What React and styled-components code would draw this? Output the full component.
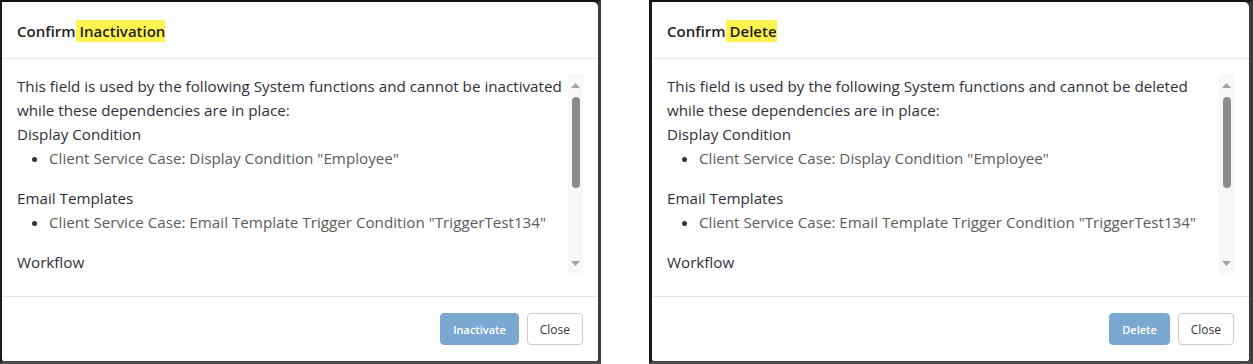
import React from 'react';
import styled, { createGlobalStyle } from 'styled-components';

const GlobalStyle = createGlobalStyle`
  html, body {
    margin: 0;
    padding: 0;
    background: #ffffff;
  }
  body {
    font-family: 'Open Sans', 'Noto Sans', sans-serif;
    color: #333;
  }
`;

const dialogs = [
  { action: 'Inactivation', verb: 'inactivated', button: 'Inactivate', edge: 'left' },
  { action: 'Delete', verb: 'deleted', button: 'Delete', edge: 'right' },
];

const dependencies = [
  { title: 'Display Condition', items: ['Client Service Case: Display Condition "Employee"'] },
  {
    title: 'Email Templates',
    items: ['Client Service Case: Email Template Trigger Condition "TriggerTest134"'],
  },
  { title: 'Workflow', items: [] },
];

function Arrow({ down }) {
  return (
    <svg width='9' height='5' viewBox='0 0 9 5'>
      <polygon points={down ? '0,0 9,0 4.5,5' : '0,5 9,5 4.5,0'} fill='#a3a3a3' />
    </svg>
  );
}

function ConfirmDialog({ action, verb, button, edge }) {
  return (
    <Frame edge={edge}>
      <Modal>
        <Header>
          <Title>
            Confirm<Mark> {action} </Mark>
          </Title>
        </Header>
        <Body>
          <ScrollArea>
            <Content>
              <p>
                This field is used by the following System functions and cannot be {verb}
                <br />
                while these dependencies are in place:
              </p>
              {dependencies.map((dep) => (
                <div key={dep.title}>
                  <div>{dep.title}</div>
                  {dep.items.length > 0 && (
                    <List>
                      {dep.items.map((item) => (
                        <li key={item}>
                          <span>{item}</span>
                        </li>
                      ))}
                    </List>
                  )}
                </div>
              ))}
            </Content>
            <Scrollbar>
              <ScrollButton>
                <Arrow />
              </ScrollButton>
              <Thumb />
              <ScrollButton down>
                <Arrow down />
              </ScrollButton>
            </Scrollbar>
          </ScrollArea>
        </Body>
        <Footer>
          <Button primary disabled>
            {button}
          </Button>
          <Button>Close</Button>
        </Footer>
      </Modal>
    </Frame>
  );
}

export default function App() {
  return (
    <>
      <GlobalStyle />
      <Page>
        {dialogs.map((d) => (
          <ConfirmDialog key={d.button} {...d} />
        ))}
      </Page>
    </>
  );
}

const Page = styled.div`
  display: flex;
  gap: 48px;
  width: 1253px;
  height: 364px;
`;

const Frame = styled.div`
  box-sizing: border-box;
  width: ${(p) => (p.edge === 'left' ? '601px' : '604px')};
  height: 364px;
  background: #2a2a2a;
  border-top: 2px solid #111;
  border-left: ${(p) => (p.edge === 'left' ? '2px' : '3px')} solid #1a1a1a;
  border-right: ${(p) => (p.edge === 'left' ? '3px' : '4px')} solid #3c3c3c;
  border-bottom: 3px solid #4a4a4a;
  display: flex;
`;

const Modal = styled.div`
  flex: 1;
  display: flex;
  flex-direction: column;
  background: #fff;
  border-radius: 0 5px 2px 2px;
  overflow: hidden;
`;

const Header = styled.div`
  height: 57px;
  box-sizing: border-box;
  padding: 1px 15px 0;
  display: flex;
  align-items: center;
  border-bottom: 1px solid #e5e5e5;
`;

const Title = styled.h4`
  margin: 0;
  font-size: 15px;
  font-weight: 600;
  color: #222;
  line-height: 20px;
`;

const Mark = styled.span`
  background: #fff44f;
  padding: 1px 0;
`;

const Body = styled.div`
  height: 237px;
  box-sizing: border-box;
  padding: 16px 15px 21px 15px;
`;

const ScrollArea = styled.div`
  display: flex;
  height: 200px;
`;

const Content = styled.div`
  flex: 1;
  overflow: hidden;
  font-size: 15.2px;
  line-height: 24px;
  margin-top: -1px;
  color: #2f2f3a;
  p {
    margin: 0;
  }
`;

const List = styled.ul`
  margin: 0 0 16px;
  padding-left: 32px;
  color: #333;
  span {
    color: #5c5c5c;
  }
`;

const Scrollbar = styled.div`
  width: 15px;
  margin-top: -1px;
  display: flex;
  flex-direction: column;
  align-items: center;
  background: #f8f8f8;
`;

const ScrollButton = styled.div`
  height: 23px;
  display: flex;
  align-items: center;
  justify-content: center;
  margin-top: ${(p) => (p.down ? 'auto' : '0')};
`;

const Thumb = styled.div`
  width: 8px;
  height: 91px;
  border-radius: 4px;
  background: #8c8c8c;
`;

const Footer = styled.div`
  flex: 1;
  display: flex;
  justify-content: flex-end;
  align-items: flex-start;
  gap: 8px;
  padding: 16px 15px 0;
  border-top: 1px solid #e5e5e5;
`;

const Button = styled.button`
  height: 32px;
  padding: 0 12px;
  font-family: 'Open Sans', 'Noto Sans', sans-serif;
  font-size: ${(p) => (p.primary ? '11px' : '12px')};
  border-radius: 4px;
  border: 1px solid ${(p) => (p.primary ? '#7aa8d0' : '#ccc')};
  background: ${(p) => (p.primary ? '#7aa8d0' : '#fff')};
  color: ${(p) => (p.primary ? '#fff' : '#333')};
  font-weight: ${(p) => (p.primary ? 600 : 400)};
`;
